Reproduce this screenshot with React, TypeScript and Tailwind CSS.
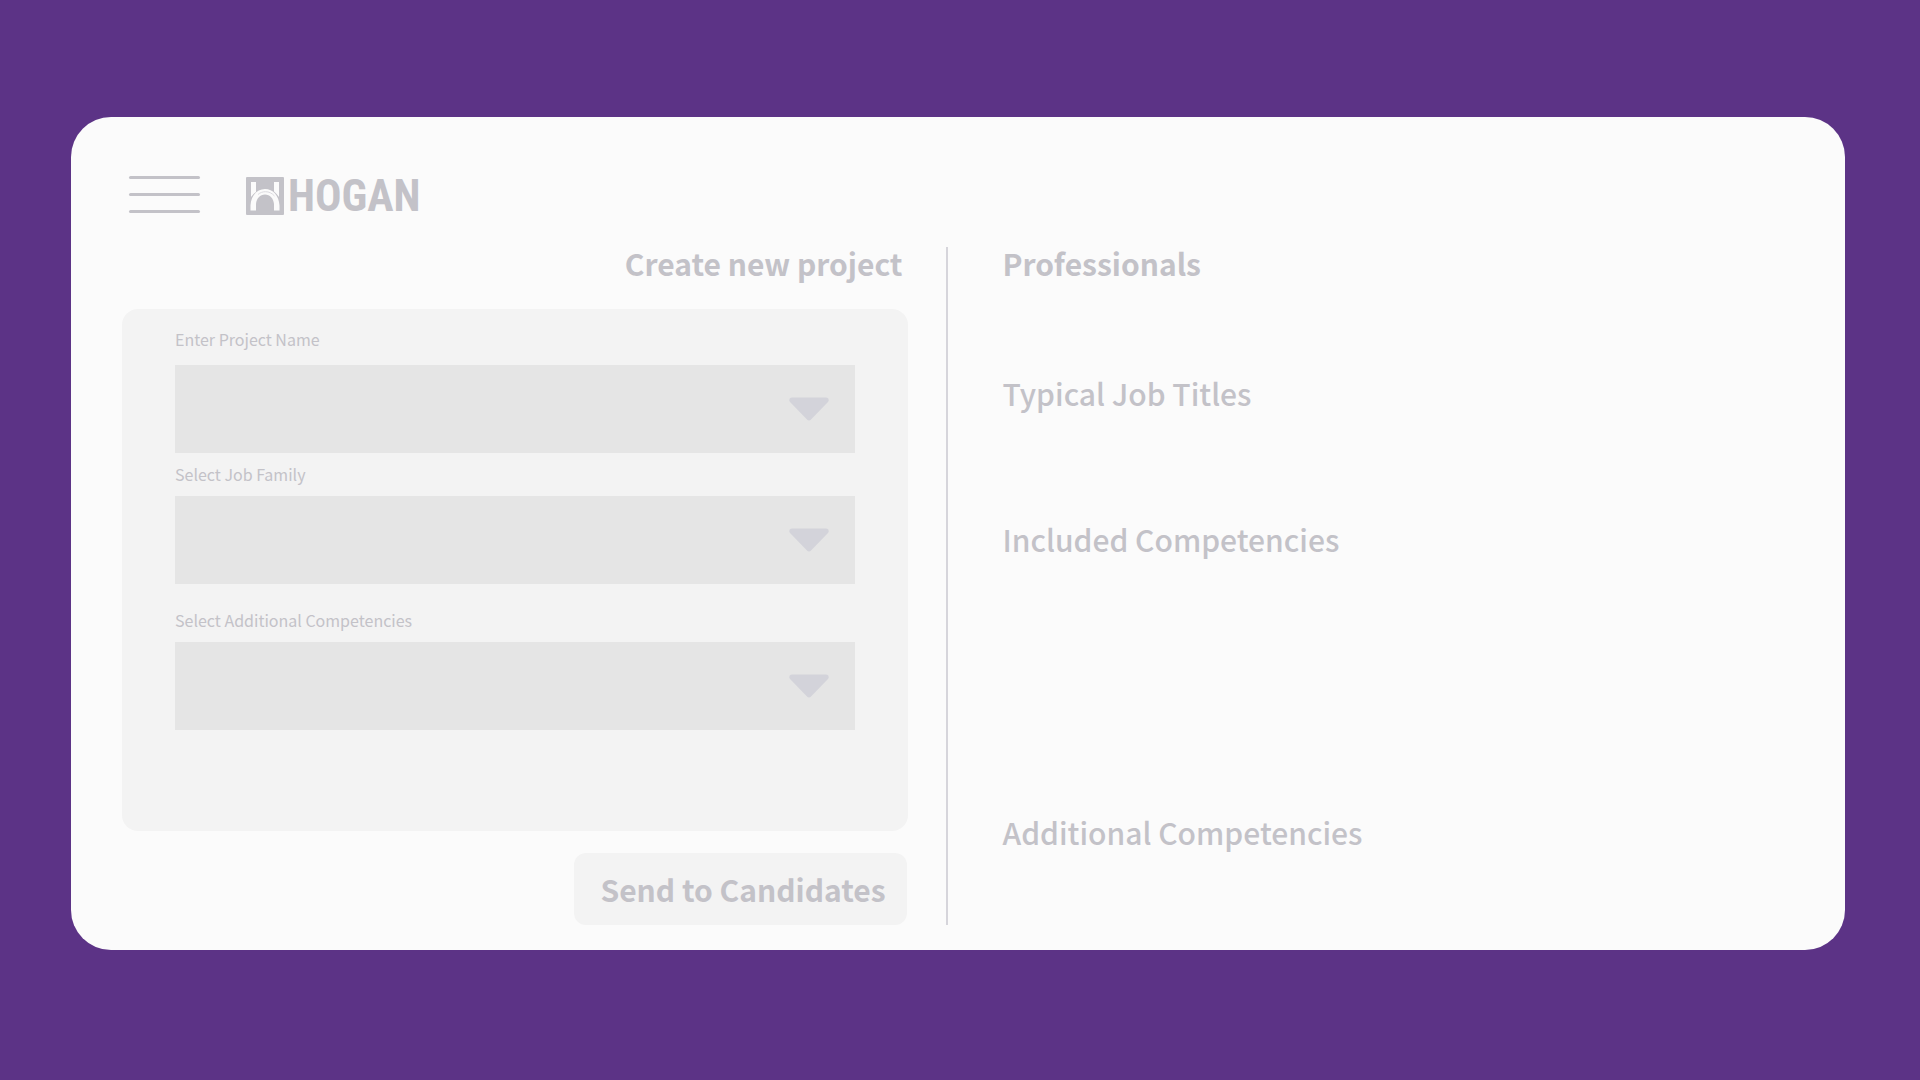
import { clsx } from 'clsx';

type Field = {
  id: string;
  label: string;
  labelClass: string;
  rowClass: string;
};

const FIELDS: Field[] = [
  { id: 'project-name', label: 'Enter Project Name', labelClass: 'mb-[14px]', rowClass: '' },
  { id: 'job-family', label: 'Select Job Family', labelClass: 'mb-[10px]', rowClass: 'mt-[9px]' },
  { id: 'additional-competencies', label: 'Select Additional Competencies', labelClass: 'mb-[10px]', rowClass: 'mt-6' },
];

function HoganMark() {
  return (
    <svg viewBox="0 0 38 38" className="h-[38px] w-[38px]" aria-hidden="true">
      <rect width="38" height="38" rx="1" fill="#c3c2c8" />
      <path d="M5 5h5v10Q7 17 5 20z" fill="#fbfbfb" />
      <path d="M28 5h5v15Q31 17 28 14.500z" fill="#fbfbfb" />
      {/* bridge arch */}
      <path
        d="M4.500 33.500v-5C5 18.500 11 12 19 12s14 6.500 14.500 16.500v5H28V27c-.5-5.500-4-9.500-9-9.500S10.500 21.500 10 27v6.500z"
        fill="#fbfbfb"
      />
      <path d="M12 17.500c2-1.800 4.500-2.800 7.500-2.800 3.500 0 6.500 1.500 9 4.300" fill="none" stroke="#dcdbe0" strokeWidth="1" />
    </svg>
  );
}

function Caret() {
  return (
    <svg
      viewBox="0 0 40 24"
      className="pointer-events-none absolute top-8 right-[26px] h-6 w-10"
      aria-hidden="true"
    >
      <path
        d="M3 .5h34c2.500 0 3.500 2.500 2 4.500L22 22.500c-1.200 1.200-2.800 1.200-4 0L1 5C-.5 3 .5.5 3 .5z"
        fill="#d3d3da"
      />
    </svg>
  );
}

function SelectField({ id, label, labelClass, rowClass }: Field) {
  return (
    <div className={rowClass}>
      <label htmlFor={id} className={clsx('block text-base leading-6', labelClass)}>
        {label}
      </label>
      <div className="relative">
        <select id={id} defaultValue="" className="block h-[88px] w-full appearance-none bg-[#e5e5e5] px-6 outline-none">
          <option value=""></option>
        </select>
        <Caret />
      </div>
    </div>
  );
}

export default function App() {
  return (
    <div className="min-h-screen bg-[#5c3386] pt-[117px] pr-[75px] pb-32 pl-[71px] font-['Noto_Sans_CJK_SC',sans-serif] text-[#c3c2c8]">
      <main className="rounded-[40px] bg-[#fbfbfb] pt-[57px] pb-[25px] pl-[51px]">
        <header className="flex h-10 items-center pl-[7px]">
          <button type="button" aria-label="Menu" className="flex w-[71px] flex-col gap-[14px]">
            <span className="h-[3px] w-full rounded-full bg-[#c3c2c8]" />
            <span className="h-[3px] w-full rounded-full bg-[#c3c2c8]" />
            <span className="h-[3px] w-full rounded-full bg-[#c3c2c8]" />
          </button>
          <a href="#" className="ml-[46px] flex items-center gap-1 pt-1">
            <HoganMark />
            <span className="font-['Roboto_Condensed','Open_Sans_Condensed',Roboto,sans-serif] text-[44px] leading-10 font-bold">
              HOGAN
            </span>
          </a>
        </header>

        <div className="mt-[33px] flex">
          {/* Project form */}
          <form className="min-w-0 flex-[786]">
            <h1 className="pr-[6px] text-right text-[30px] leading-8 font-bold">Create new project</h1>
            <div className="mt-[30px] rounded-2xl bg-[#f3f3f3] px-[53px] pt-[18px] pb-[101px]">
              {FIELDS.map((field) => (
                <SelectField key={field.id} {...field} />
              ))}
            </div>
            <div className="mt-[22px] flex justify-end pr-px">
              <button type="button" className="rounded-xl bg-[#f3f3f3] py-4 pr-[22px] pl-[26px] text-[30px] leading-10 font-bold">
                Send to Candidates
              </button>
            </div>
          </form>

          <div className="ml-[38px] w-[2px] bg-[#d6d5db]" />

          {/* Job family details */}
          <section className="min-w-0 flex-[842] pl-[54px]">
            <h2 className="text-[30px] leading-8 font-bold">Professionals</h2>
            <h3 className="mt-[98px] text-[30px] leading-8 font-medium">Typical Job Titles</h3>
            <h3 className="mt-[114px] text-[30px] leading-8 font-medium">Included Competencies</h3>
            <h3 className="mt-[261px] text-[30px] leading-8 font-medium">Additional Competencies</h3>
          </section>
        </div>
      </main>
    </div>
  );
}
